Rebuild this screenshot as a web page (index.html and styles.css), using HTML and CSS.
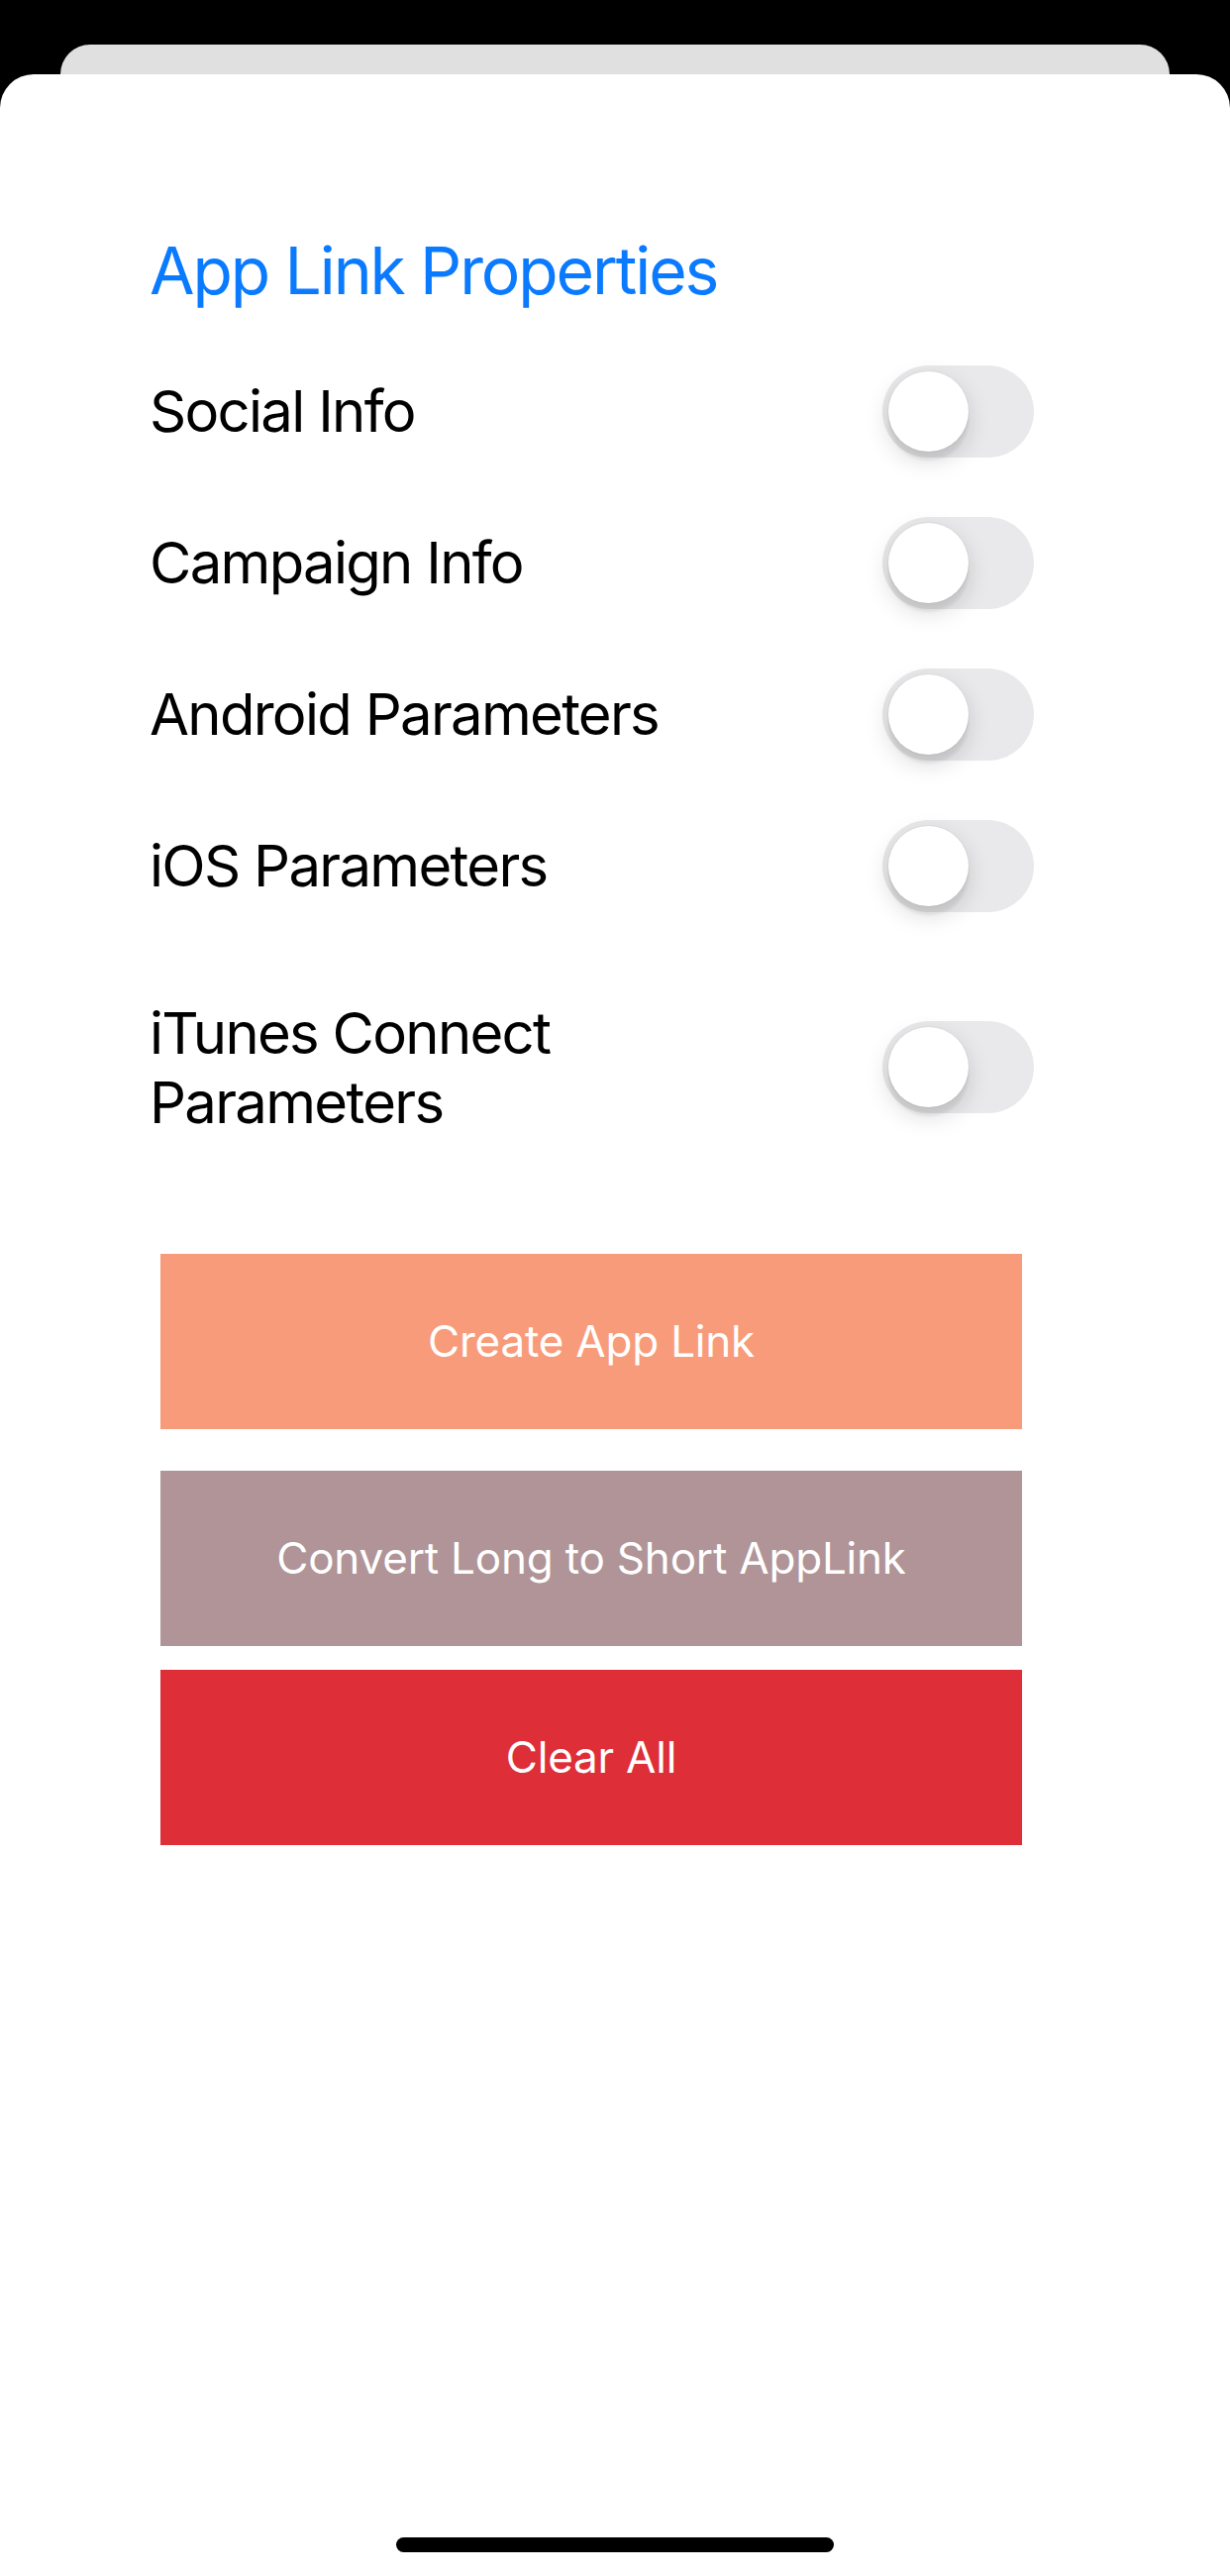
FILE: index.html
```html
<!DOCTYPE html>
<html lang="en">
<head>
<meta charset="utf-8">
<title>App Link Properties</title>
<link rel="stylesheet" href="styles.css">
</head>
<body>
<div class="screen">
  <div class="card-behind"></div>
  <main class="sheet">
    <h1 class="title">App Link Properties</h1>
    <ul class="rows">
      <li class="row"><span class="label">Social Info</span><span class="switch"><span class="knob"></span></span></li>
      <li class="row"><span class="label">Campaign Info</span><span class="switch"><span class="knob"></span></span></li>
      <li class="row"><span class="label">Android Parameters</span><span class="switch"><span class="knob"></span></span></li>
      <li class="row"><span class="label">iOS Parameters</span><span class="switch"><span class="knob"></span></span></li>
      <li class="row row-tall"><span class="label">iTunes Connect<br>Parameters</span><span class="switch"><span class="knob"></span></span></li>
    </ul>
    <div class="actions">
      <button class="btn btn-create">Create App Link</button>
      <button class="btn btn-convert">Convert Long to Short AppLink</button>
      <button class="btn btn-clear">Clear All</button>
    </div>
    <div class="home-indicator"></div>
  </main>
</div>
</body>
</html>
```

FILE: styles.css
```css
* { box-sizing: border-box; }

html, body {
  margin: 0;
  padding: 0;
  background: #000;
}

body {
  font-family: Inter, "Noto Sans", "Liberation Sans", sans-serif;
  width: 1242px;
  height: 2601px;
  overflow: hidden;
}

.screen {
  padding-top: 45px;
  height: 2601px;
  display: flex;
  flex-direction: column;
}

.card-behind {
  margin: 0 61px;
  height: 60px;
  flex: none;
  background: #e0e0e0;
  border-radius: 30px 30px 0 0;
}

.sheet {
  position: relative;
  margin-top: -30px;
  flex: 1;
  background: #fff;
  border-radius: 34px 34px 0 0;
  padding: 158px 198px 0 151px;
  display: flex;
  flex-direction: column;
}

.title {
  margin: 0;
  font-size: 66px;
  line-height: 80px;
  font-weight: 400;
  color: #0a7aff;
  letter-spacing: -2.1px;
}

.rows {
  list-style: none;
  margin: 25.5px 0 0;
  padding: 0;
}

.row {
  height: 153px;
  display: flex;
  align-items: center;
  justify-content: space-between;
}

.row-tall {
  margin-top: 32px;
  height: 190px;
}

.label {
  font-size: 58px;
  line-height: 70px;
  color: #000;
  letter-spacing: -1.7px;
}

.switch {
  position: relative;
  flex: none;
  width: 153px;
  height: 93px;
  border-radius: 47px;
  background: #e9e9eb;
}

.knob {
  position: absolute;
  left: 6px;
  top: 6px;
  width: 81px;
  height: 81px;
  border-radius: 50%;
  background: #fff;
  box-shadow: 0 9px 24px rgba(0,0,0,0.15), 0 9px 3px rgba(0,0,0,0.06), 0 0 0 1px rgba(0,0,0,0.04);
}

.actions {
  margin: 93px 0 0 11px;
  width: 870px;
  display: flex;
  flex-direction: column;
}

.btn {
  display: block;
  width: 870px;
  height: 177px;
  border: 0;
  border-radius: 0;
  padding: 0;
  font-family: Inter, "Noto Sans", "Liberation Sans", sans-serif;
  font-size: 44px;
  color: #fff;
  letter-spacing: -0.2px;
}

.btn-create { background: #f89b7a; }
.btn-convert { background: #b09497; margin-top: 42px; }
.btn-clear { background: #de2e38; margin-top: 24px; }

.home-indicator {
  margin: auto 0 24px 47px;
  align-self: center;
  width: 442px;
  height: 15px;
  border-radius: 8px;
  background: #000;
}
```
